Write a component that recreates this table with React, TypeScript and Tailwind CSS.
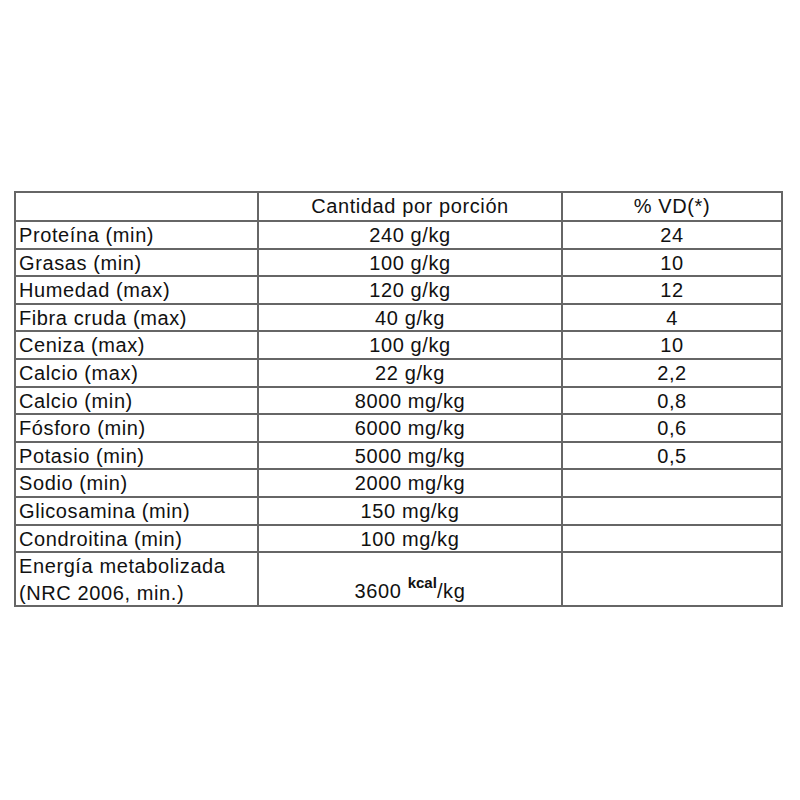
import React from "react";

const rows: [string, string, string][] = [
  ["Proteína (min)", "240 g/kg", "24"],
  ["Grasas (min)", "100 g/kg", "10"],
  ["Humedad (max)", "120 g/kg", "12"],
  ["Fibra cruda (max)", "40 g/kg", "4"],
  ["Ceniza (max)", "100 g/kg", "10"],
  ["Calcio (max)", "22 g/kg", "2,2"],
  ["Calcio (min)", "8000 mg/kg", "0,8"],
  ["Fósforo (min)", "6000 mg/kg", "0,6"],
  ["Potasio (min)", "5000 mg/kg", "0,5"],
  ["Sodio (min)", "2000 mg/kg", ""],
  ["Glicosamina (min)", "150 mg/kg", ""],
  ["Condroitina (min)", "100 mg/kg", ""],
];

const cell = "border-r-2 border-b-2 border-[#666] leading-[27px] whitespace-nowrap";

export default function App() {
  return (
    <div
      className="w-[800px] h-[800px] bg-white text-[#111] pt-[191px] pl-[14px]"
      style={{ fontFamily: '"Liberation Sans", Arial, sans-serif' }}
    >
      <div className="grid grid-cols-[243px_304px_220px] grid-rows-[29px_repeat(12,27.6px)_54px] w-[769px] border-l-2 border-t-2 border-[#666] text-[20px] tracking-[0.6px]">
        <div className={cell}></div>
        <div className={`${cell} text-center`}>Cantidad por porción</div>
        <div className={`${cell} text-center`}>% VD(*)</div>
        {rows.map(([a, b, c]) => (
          <React.Fragment key={a}>
            <div className={`${cell} pl-[3px]`}>{a}</div>
            <div className={`${cell} text-center`}>{b}</div>
            <div className={`${cell} text-center`}>{c}</div>
          </React.Fragment>
        ))}
        <div className={`${cell} pl-[3px]`}>
          Energía metabolizada
          <br />
          (NRC 2006, min.)
        </div>
        <div className={`${cell} flex items-end justify-center`}>
          <span>
            3600{" "}
            <span className="text-[15px] font-bold tracking-normal align-[10px]">kcal</span>
            /kg
          </span>
        </div>
        <div className={cell}></div>
      </div>
    </div>
  );
}
